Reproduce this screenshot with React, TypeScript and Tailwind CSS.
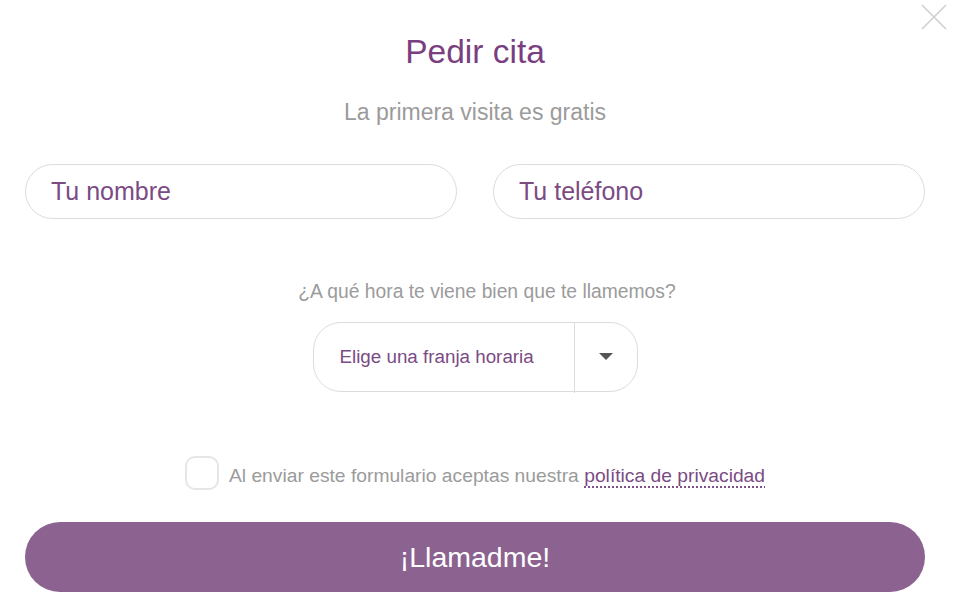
import { useState } from 'react';

const font = { fontFamily: '"Liberation Sans", Arial, sans-serif' };

const App = () => {
  const [name, setName] = useState('');
  const [phone, setPhone] = useState('');
  const [accepted, setAccepted] = useState(false);

  return (
    <main
      style={font}
      className="relative h-[605px] w-[955px] overflow-hidden bg-white pl-[25px] pr-[30px] pt-[32px]"
    >
      <button
        type="button"
        aria-label="Cerrar"
        className="absolute right-[8px] top-[4px] h-[26px] w-[26px]"
      >
        <svg viewBox="0 0 26 26" className="h-full w-full" fill="none">
          <path d="M1 1 L25 25 M25 1 L1 25" stroke="#cfcfcf" strokeWidth="1.6" />
        </svg>
      </button>

      <h1 className="text-center text-[33.5px] leading-[40px] text-[#7a3f80]">
        Pedir cita
      </h1>

      <p className="mt-[25px] text-center text-[23px] leading-[30px] text-[#9b9b9b]">
        La primera visita es gratis
      </p>

      <div className="mt-[37px] grid grid-cols-2 gap-[36px]">
        <input
          type="text"
          value={name}
          onChange={(event) => setName(event.target.value)}
          placeholder="Tu nombre"
          style={font}
          className="h-[55px] rounded-full border border-[#dcdcdc] px-[25px] text-[25px] text-[#7b4b84] outline-none placeholder:text-[#7b4b84]"
        />
        <input
          type="text"
          value={phone}
          onChange={(event) => setPhone(event.target.value)}
          placeholder="Tu teléfono"
          style={font}
          className="h-[55px] rounded-full border border-[#dcdcdc] px-[25px] text-[25px] text-[#7b4b84] outline-none placeholder:text-[#7b4b84]"
        />
      </div>

      <p className="mt-[61px] pl-[24px] text-center text-[19.3px] leading-[24px] text-[#9b9b9b]">
        ¿A qué hora te viene bien que te llamemos?
      </p>

      <div className="mt-[18px] flex justify-center">
        <div className="flex h-[70px] w-[325px] items-stretch rounded-[28px] border border-[#dcdcdc]">
          <div className="flex flex-1 items-center pl-[26px] text-[18.8px] text-[#7b4b84]">
            Elige una franja horaria
          </div>
          <div className="-mb-[2px] w-px bg-[#dcdcdc]" />
          <div className="flex w-[62px] items-center justify-center">
            <svg width="14" height="8" viewBox="0 0 14 8">
              <path d="M0 0 H14 L7 7 Z" fill="#555555" />
            </svg>
          </div>
        </div>
      </div>

      <div className="mt-[64px] flex items-center justify-center gap-[10px]">
        <button
          type="button"
          onClick={() => setAccepted((value) => !value)}
          className="flex h-[34px] w-[34px] shrink-0 items-center justify-center rounded-[10px] border-2 border-[#e6e6e6]"
        >
          {accepted && <span className="text-[18px] text-[#8b6290]">✓</span>}
        </button>
        <p className="mt-[5px] text-[19.25px] leading-[26px] text-[#9b9b9b]">
          Al enviar este formulario aceptas nuestra{' '}
          <a
            href="#"
            className="text-[#7b4b84] underline decoration-[#7b4b84] decoration-dotted underline-offset-[5px]"
          >
            política de privacidad
          </a>
        </p>
      </div>

      <button
        type="button"
        style={font}
        className="mt-[32px] h-[70px] w-full rounded-full bg-[#8b6290] text-[28.5px] text-white"
      >
        ¡Llamadme!
      </button>
    </main>
  );
};

export default App;
